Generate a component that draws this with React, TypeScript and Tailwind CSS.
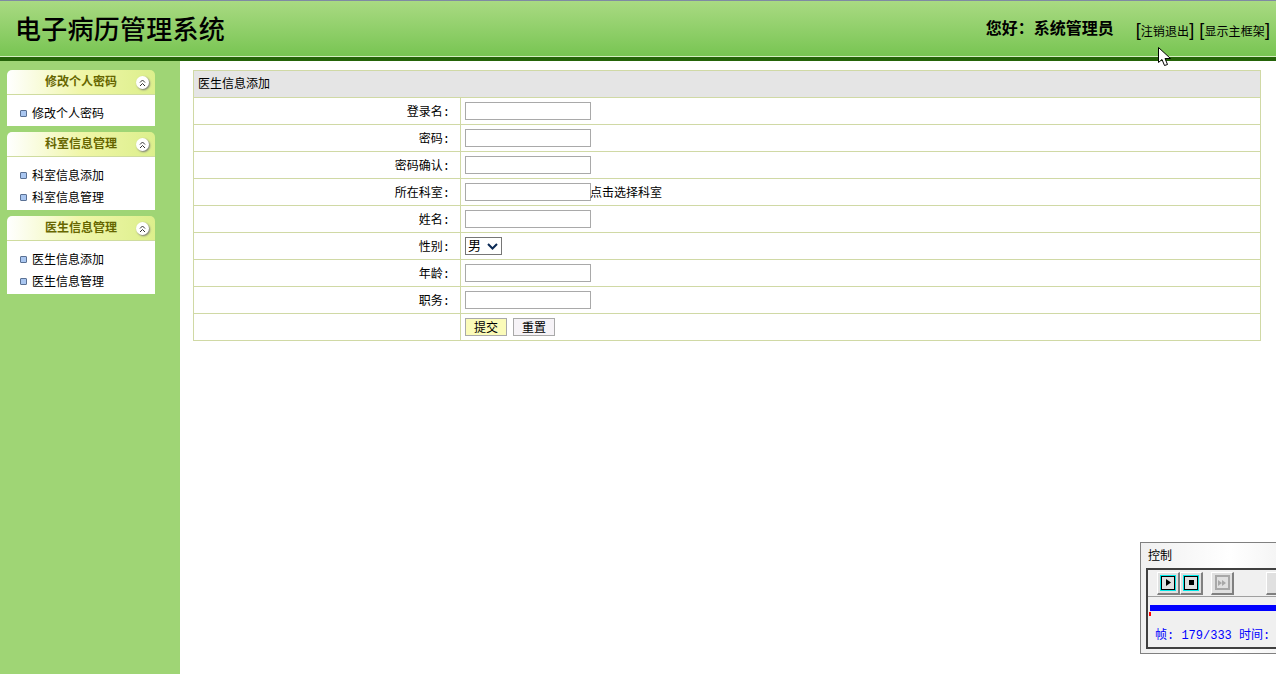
const FONT = "font-['Liberation_Sans','Noto_Sans_CJK_SC',sans-serif]";

const menus = [
  { title: "修改个人密码", items: ["修改个人密码"] },
  { title: "科室信息管理", items: ["科室信息添加", "科室信息管理"] },
  { title: "医生信息管理", items: ["医生信息添加", "医生信息管理"] },
];

function Chevrons() {
  return (
    <span className="flex h-[13px] w-[13px] items-center justify-center rounded-full bg-white shadow-[1px_1px_2px_#777]">
      <svg width="7" height="8" viewBox="0 0 7 8" fill="none" stroke="#333" strokeWidth="1">
        <path d="M1 3.5 L3.5 1 L6 3.5 M1 7 L3.5 4.5 L6 7" />
      </svg>
    </span>
  );
}

function MenuPanel({ title, items }: { title: string; items: string[] }) {
  return (
    <div className="w-[148px]">
      <div className="relative flex h-[25px] items-center rounded-t-[5px] border-b border-[#cfdc9f] bg-gradient-to-r from-white via-[#f0f6a8] to-[#dcef8c]">
        <span className="w-full text-center text-[12px] font-bold text-[#666600]">{title}</span>
        <span className="absolute left-[129px] top-[6px]">
          <Chevrons />
        </span>
      </div>
      <ul className="bg-white pb-[1px] pt-[8px]">
        {items.map((item) => (
          <li key={item} className="flex h-[22px] items-center pl-[13px] text-[12px] text-black">
            <span className="mb-[1px] mr-[5px] h-[7px] w-[7px] rounded-[1px] border border-[#5a7194] bg-[#a9c6f0]" />
            {item}
          </li>
        ))}
      </ul>
    </div>
  );
}

function TextInput() {
  return <input type="text" className="h-[18px] w-[126px] border border-[#a9a9a9] bg-white align-middle" />;
}

const rows: { label: string; field: React.ReactNode }[] = [
  { label: "登录名:", field: <TextInput /> },
  { label: "密码:", field: <TextInput /> },
  { label: "密码确认:", field: <TextInput /> },
  {
    label: "所在科室:",
    field: (
      <span className="flex items-center">
        <TextInput />
        <span className="-ml-px pt-[2px]">点击选择科室</span>
      </span>
    ),
  },
  { label: "姓名:", field: <TextInput /> },
  {
    label: "性别:",
    field: (
      <span className="flex h-[18px] w-[37px] items-center justify-between border border-[#767676] bg-white pl-[2px] pr-[3px] text-[13px]">
        男
        <svg width="11" height="7" viewBox="0 0 11 7" fill="none" stroke="#0b2a55" strokeWidth="2">
          <path d="M1 1 L5.5 5.5 L10 1" />
        </svg>
      </span>
    ),
  },
  { label: "年龄:", field: <TextInput /> },
  { label: "职务:", field: <TextInput /> },
  {
    label: "",
    field: (
      <span className="flex gap-[6px]">
        <button className="h-[18px] w-[42px] border border-[#a9a9a9] bg-[#fbfbb9] text-[12px] text-black">提交</button>
        <button className="h-[18px] w-[42px] border border-[#a9a9a9] bg-[#f6f3f7] text-[12px] text-black">重置</button>
      </span>
    ),
  },
];

function ToolButton({ children }: { children?: React.ReactNode }) {
  return (
    <span className="flex h-[23px] w-[23px] shrink-0 items-center justify-center border-b-2 border-l border-r-2 border-t border-b-[#808080] border-l-white border-r-[#808080] border-t-white bg-[#e0e0e0]">
      {children}
    </span>
  );
}

function ActiveFrame({ children }: { children: React.ReactNode }) {
  return (
    <span className="flex h-[16px] w-[16px] items-center justify-center border border-[#00e8e8] bg-black p-[1px]">
      <span className="flex h-full w-full items-center justify-center bg-[#e0e0e0]">{children}</span>
    </span>
  );
}

function ControlWindow() {
  return (
    <div className="absolute left-[1140px] top-[542px] h-[112px] w-[180px] border border-[#808080] bg-gradient-to-r from-[#f0f0f0] via-white to-[#ececec] px-[5px] pt-[5px]">
      <div className="h-[20px] pl-[2px] text-[12px] leading-[16px] text-black">控制</div>
      <div className="h-[81px] border-2 border-[#404040] bg-[#f0f0f0]">
        <div className="flex h-[27px] items-center border-b border-[#a0a0a0] pl-[9px]">
          <ToolButton>
            <ActiveFrame>
              <svg width="5" height="7" viewBox="0 0 5 7"><path d="M0 0 L5 3.5 L0 7 Z" fill="#000" /></svg>
            </ActiveFrame>
          </ToolButton>
          <ToolButton>
            <ActiveFrame>
              <span className="h-[5px] w-[5px] bg-black" />
            </ActiveFrame>
          </ToolButton>
          <span className="ml-[8px] shrink-0">
            <ToolButton>
              <span className="flex h-[15px] w-[15px] items-center justify-center border-2 border-[#a8a8a8]">
                <svg width="9" height="6" viewBox="0 0 9 6"><path d="M0 0 L4 3 L0 6 Z M4 0 L8 3 L4 6 Z" fill="#a8a8a8" /></svg>
              </span>
            </ToolButton>
          </span>
          <span className="ml-[32px] shrink-0">
            <ToolButton />
          </span>
        </div>
        <div className="ml-[2px] mt-[8px] h-[6px] bg-[#0000ff]" />
        <div className="ml-[1px] mt-[1px] h-[4px] w-[2px] bg-[#ff0000]" />
        <div className="mt-[12px] whitespace-nowrap pl-[7px] font-['Liberation_Mono','Noto_Sans_CJK_SC',monospace] text-[12px] leading-[16px] text-[#0000ff]">
          帧: 179/333 时间:
        </div>
      </div>
    </div>
  );
}

export default function App() {
  return (
    <div className={`relative flex h-[674px] w-[1276px] flex-col overflow-hidden bg-white ${FONT}`}>
      {/* Header */}
      <header className="flex h-[61px] shrink-0 flex-col">
        <div className="flex h-[56px] items-center border-t border-[#7f8aa3] bg-gradient-to-b from-[#a9da82] to-[#78c552] pl-[15px] pr-[6px]">
          <h1 className="pt-[2px] text-[26px] font-medium leading-none tracking-[0.25px] text-black">电子病历管理系统</h1>
          <div className="ml-auto text-[16px] font-bold text-black">{"您好\uFF1A系统管理员"}</div>
          <div className="ml-[22px] flex items-center gap-[5px] pt-[5px] text-[12px] text-black">
            <span className="tracking-[0.1px]">
              <span className="text-[18px] leading-none">[</span>注销退出<span className="text-[18px] leading-none">]</span>
            </span>
            <span className="tracking-[0.1px]">
              <span className="text-[18px] leading-none">[</span>显示主框架<span className="text-[18px] leading-none">]</span>
            </span>
          </div>
        </div>
        <div className="h-px bg-[#d4eec0]" />
        <div className="h-[4px] bg-[#256409]" />
      </header>

      <div className="flex min-h-0 flex-1">
        {/* Sidebar */}
        <aside className="flex w-[180px] shrink-0 flex-col gap-[6px] bg-[#9fd575] pl-[7px] pt-[9px]">
          {menus.map((menu) => (
            <MenuPanel key={menu.title} title={menu.title} items={menu.items} />
          ))}
        </aside>

        {/* Main */}
        <main className="flex-1 pl-[13px] pt-[9px]">
          <table className="w-[1068px] table-fixed border-collapse text-[12px] text-black">
            <colgroup>
              <col className="w-[267px]" />
              <col />
            </colgroup>
            <thead>
              <tr className="h-[27px]">
                <th colSpan={2} className="border border-[#d0d9a5] bg-[#e5e5e5] pl-[4px] text-left font-normal">
                  医生信息添加
                </th>
              </tr>
            </thead>
            <tbody>
              {rows.map((row, i) => (
                <tr key={i} className="h-[27px]">
                  <td className="border border-[#d0d9a5] pr-[10px] pt-[3px] text-right font-['Liberation_Mono','Noto_Sans_CJK_SC',monospace]">{row.label}</td>
                  <td className="border border-[#d0d9a5] pl-[4px]">{row.field}</td>
                </tr>
              ))}
            </tbody>
          </table>
        </main>
      </div>

      <ControlWindow />

      {/* Mouse pointer */}
      <svg className="absolute left-[1158px] top-[47px]" width="14" height="20" viewBox="0 0 14 20">
        <path d="M0.5 0.5 L0.5 15.5 L4 12.5 L6.5 18.5 L9.5 17.5 L7 11.5 L12.5 11.5 Z" fill="#fff" stroke="#000" strokeWidth="1" />
      </svg>
    </div>
  );
}
